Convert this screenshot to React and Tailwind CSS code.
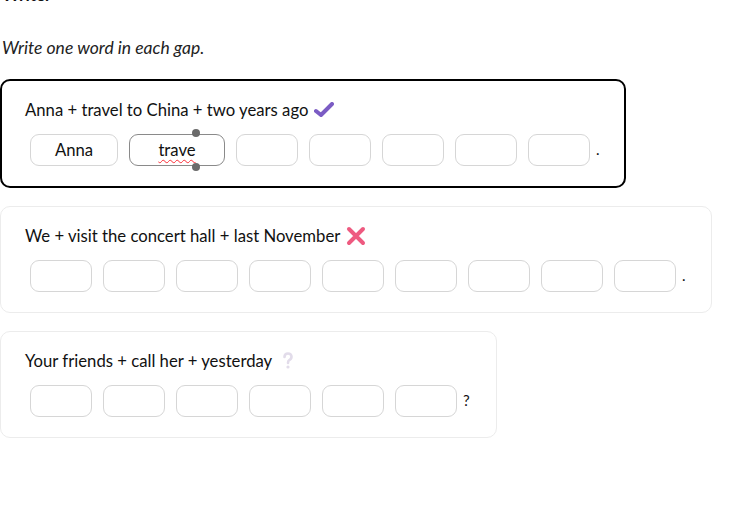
import React from 'react';

const font = { fontFamily: 'Lato, "Noto Sans", sans-serif' };

// a single gap box; width grows when it holds a word
const Gap = ({ value, w = 'w-[62px]', focused }) => (
    <div
        className={`relative h-[32px] ${w} shrink-0 rounded-[9px] border ${focused ? 'border-[#8a8a8a]' : 'border-[#d6d6d6]'} flex items-center justify-center text-[16.7px] text-[#111]`}
    >
        {focused ? (
            <>
                <span className="underline decoration-wavy decoration-red-500 decoration-1 underline-offset-[3px]">{value}</span>
                <span className="absolute left-[62px] top-[-6px] w-[8px] h-[8px] rounded-full bg-[#6b6b6b]" />
                <span className="absolute left-[62px] bottom-[-6px] w-[8px] h-[8px] rounded-full bg-[#6b6b6b]" />
            </>
        ) : (
            value
        )}
    </div>
);

const CheckIcon = () => (
    <svg width="20" height="16" viewBox="0 0 20 16" className="ml-[6px]">
        <path d="M2 9 L7 13 L18 2" fill="none" stroke="#7b5cc4" strokeWidth="4" strokeLinecap="round" strokeLinejoin="round" />
    </svg>
);

const CrossIcon = () => (
    <svg width="20" height="20" viewBox="0 0 20 20" className="ml-[6px]">
        <path d="M3 3 L17 17 M17 3 L3 17" stroke="#ee5a80" strokeWidth="4" strokeLinecap="round" />
    </svg>
);

const QuestionIcon = () => (
    <svg width="12" height="18" viewBox="0 0 12 18" className="ml-[10px]">
        <path d="M2.5 5 Q2.5 1.5 6 1.5 Q9.5 1.5 9.5 4.8 Q9.5 7 7 8.3 Q6 9 6 11" fill="none" stroke="#e2dcea" strokeWidth="2.6" strokeLinecap="round" />
        <circle cx="6" cy="15" r="1.6" fill="#e2dcea" />
    </svg>
);

const Card = ({ prompt, icon, gaps, end, active, width }) => (
    <div
        className={`${width} rounded-[10px] bg-white pr-[20px] pt-[17px] pb-[20px] ${active ? 'border-2 border-black pl-[23px]' : 'border border-[#ececec] pl-[24px]'}`}
    >
        <div className="flex items-center h-[24px] text-[16.7px] text-[#111]">
            <span>{prompt}</span>
            {icon}
        </div>
        <div className="flex items-end gap-[11px] mt-[12px] pl-[5px]">
            {gaps.map((g, i) => (
                <Gap key={i} {...g} />
            ))}
            <span className="-ml-[5px] pb-[6px] text-[15px] text-[#111]">{end}</span>
        </div>
    </div>
);

const blank = (n) => Array.from({ length: n }, () => ({}));

export default function App() {
    return (
        <div className="w-[741px] h-[515px] bg-white overflow-hidden" style={font}>
            <div className="-mt-[18px] h-[24px] text-[17px] font-bold text-[#111] pl-[2px]">Write.</div>
            <p className="mt-[29px] italic text-[17.5px] text-[#222] pl-[2px]">Write one word in each gap.</p>

            <div className="mt-[18px] flex flex-col gap-[18px]">
                <Card
                    active
                    width="w-[626px]"
                    prompt="Anna + travel to China + two years ago"
                    icon={<CheckIcon />}
                    gaps={[
                        { value: 'Anna', w: 'w-[88px]' },
                        { value: 'trave', w: 'w-[96px]', focused: true },
                        ...blank(5),
                    ]}
                    end="."
                />
                <Card
                    width="w-[712px]"
                    prompt="We + visit the concert hall + last November"
                    icon={<CrossIcon />}
                    gaps={blank(9)}
                    end="."
                />
                <Card
                    width="w-[497px]"
                    prompt="Your friends + call her + yesterday"
                    icon={<QuestionIcon />}
                    gaps={blank(6)}
                    end="?"
                />
            </div>
        </div>
    );
}
